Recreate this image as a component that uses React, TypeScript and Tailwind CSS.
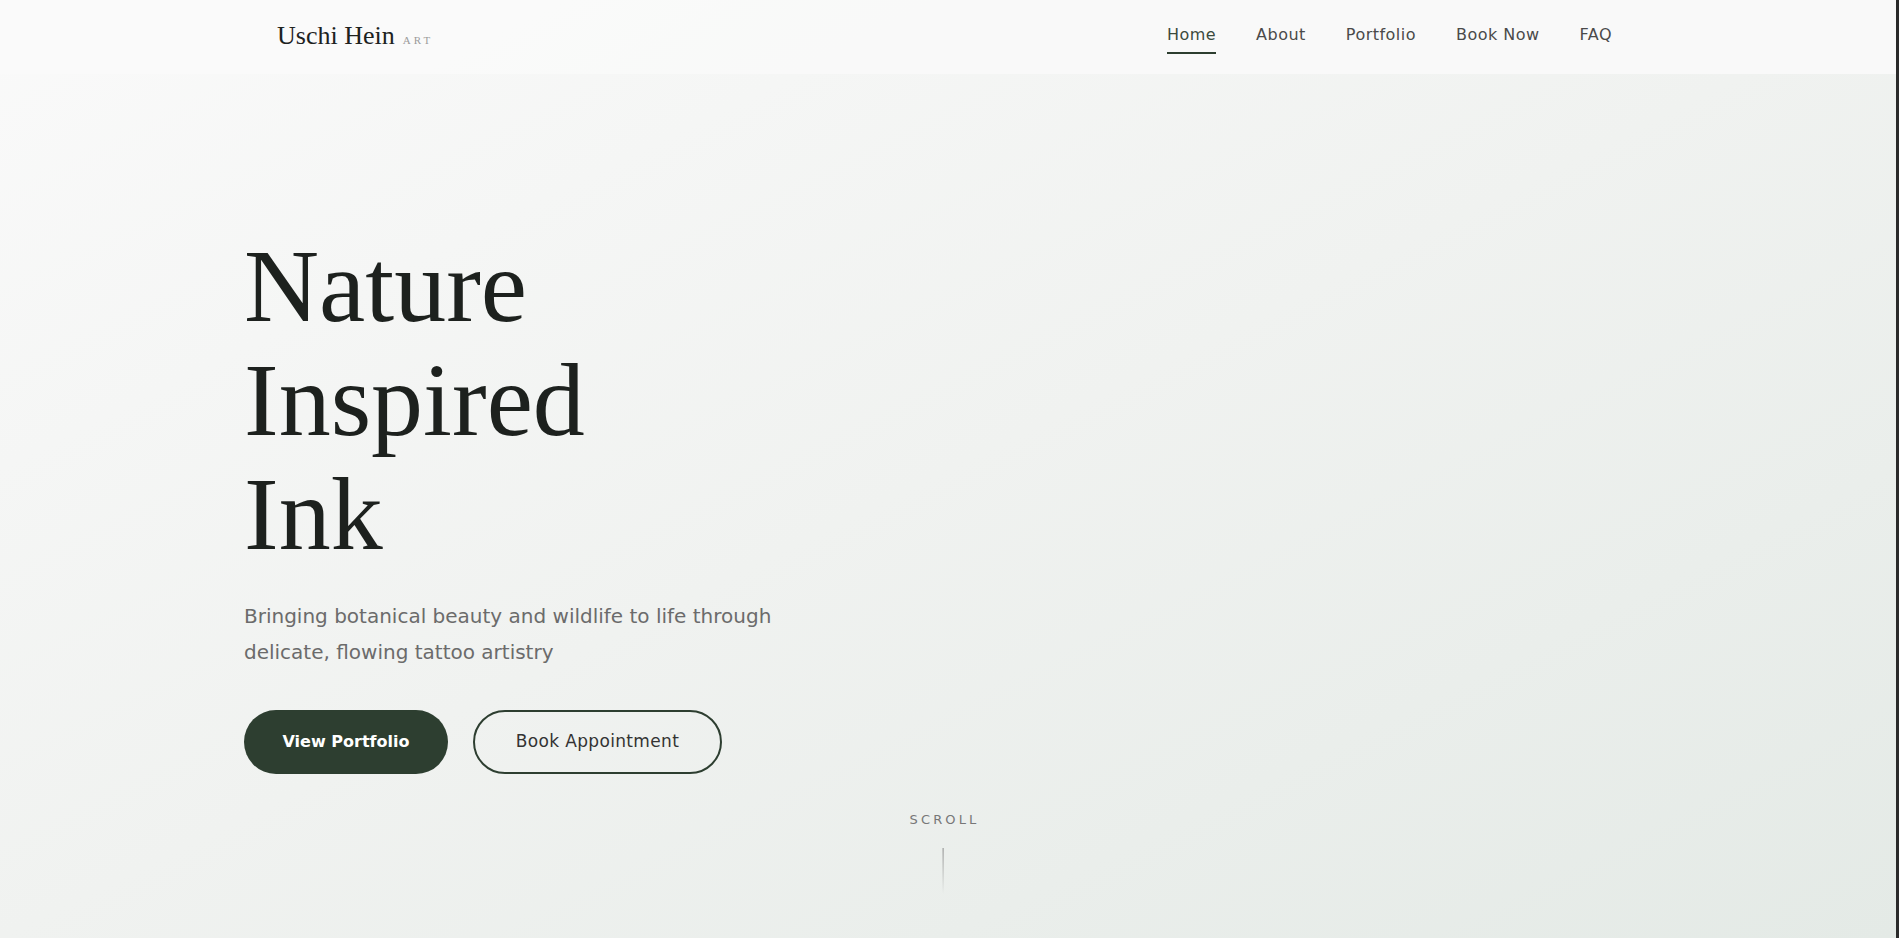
const serif = { fontFamily: '"Liberation Serif", "DejaVu Serif", serif' }

const NAV = ['Home', 'About', 'Portfolio', 'Book Now', 'FAQ']

export default function App() {
  return (
    <div className="flex h-[938px] w-full overflow-hidden font-['DejaVu_Sans',sans-serif]">
      <div className="relative flex flex-1 flex-col bg-gradient-to-br from-[#fafafa] via-[#f0f2f0] to-[#e4eae6]">
        {/* Header */}
        <header className="h-[74px] shrink-0 bg-[#fafafa]/90">
          <div className="mx-auto flex h-full max-w-[1408px] items-center justify-between pl-[33px] pr-[40px]">
            <div className="flex items-baseline gap-2 pb-1">
              <span className="text-[26px] text-[#1d221e]" style={serif}>
                Uschi Hein
              </span>
              <span className="text-[11px] tracking-[0.28em] text-[#9a9a9a]" style={serif}>
                ART
              </span>
            </div>
            <nav className="flex items-center gap-[40px] text-[16px] tracking-[0.03em] text-[#4a4a4a]">
              {NAV.map((item, i) => (
                <a key={item} className="relative pb-1">
                  <span className={i === 0 ? 'text-[#3b4a3e]' : ''}>{item}</span>
                  {i === 0 && (
                    <span className="absolute bottom-[-3px] left-0 h-[2px] w-full bg-[#2d3e30]" />
                  )}
                </a>
              ))}
            </nav>
          </div>
        </header>

        {/* Hero */}
        <main className="flex-1">
          <div className="mx-auto max-w-[1408px] pt-[155px]">
            <h1 className="text-[104px] leading-[114px] text-[#1d211e]" style={serif}>
              Nature
              <br />
              Inspired
              <br />
              Ink
            </h1>
            <p className="mt-[27px] max-w-[580px] text-[20px] leading-[36px] text-[#6b6b6b]">
              Bringing botanical beauty and wildlife to life through delicate, flowing tattoo artistry
            </p>
            <div className="mt-[40px] flex gap-[25px]">
              <button className="h-[64px] w-[204px] rounded-full bg-[#2d3e30] text-[16px] font-semibold text-white">
                View Portfolio
              </button>
              <button className="h-[64px] w-[249px] rounded-full border-2 border-[#2d3e30] text-[17px] tracking-[0.02em] text-[#333]">
                Book Appointment
              </button>
            </div>
          </div>
        </main>

        {/* Scroll indicator */}
        <div className="absolute bottom-[44px] left-[calc(50%-5px)] flex -translate-x-1/2 flex-col items-center gap-[19px]">
          <span className="pl-[3px] text-[13px] tracking-[0.24em] text-[#777]">SCROLL</span>
          <span className="h-[46px] w-px bg-gradient-to-b from-[#8a8a8a] to-transparent" />
        </div>
      </div>
      <div className="w-[3px] shrink-0 bg-[#2a2a2a]" />
    </div>
  )
}
